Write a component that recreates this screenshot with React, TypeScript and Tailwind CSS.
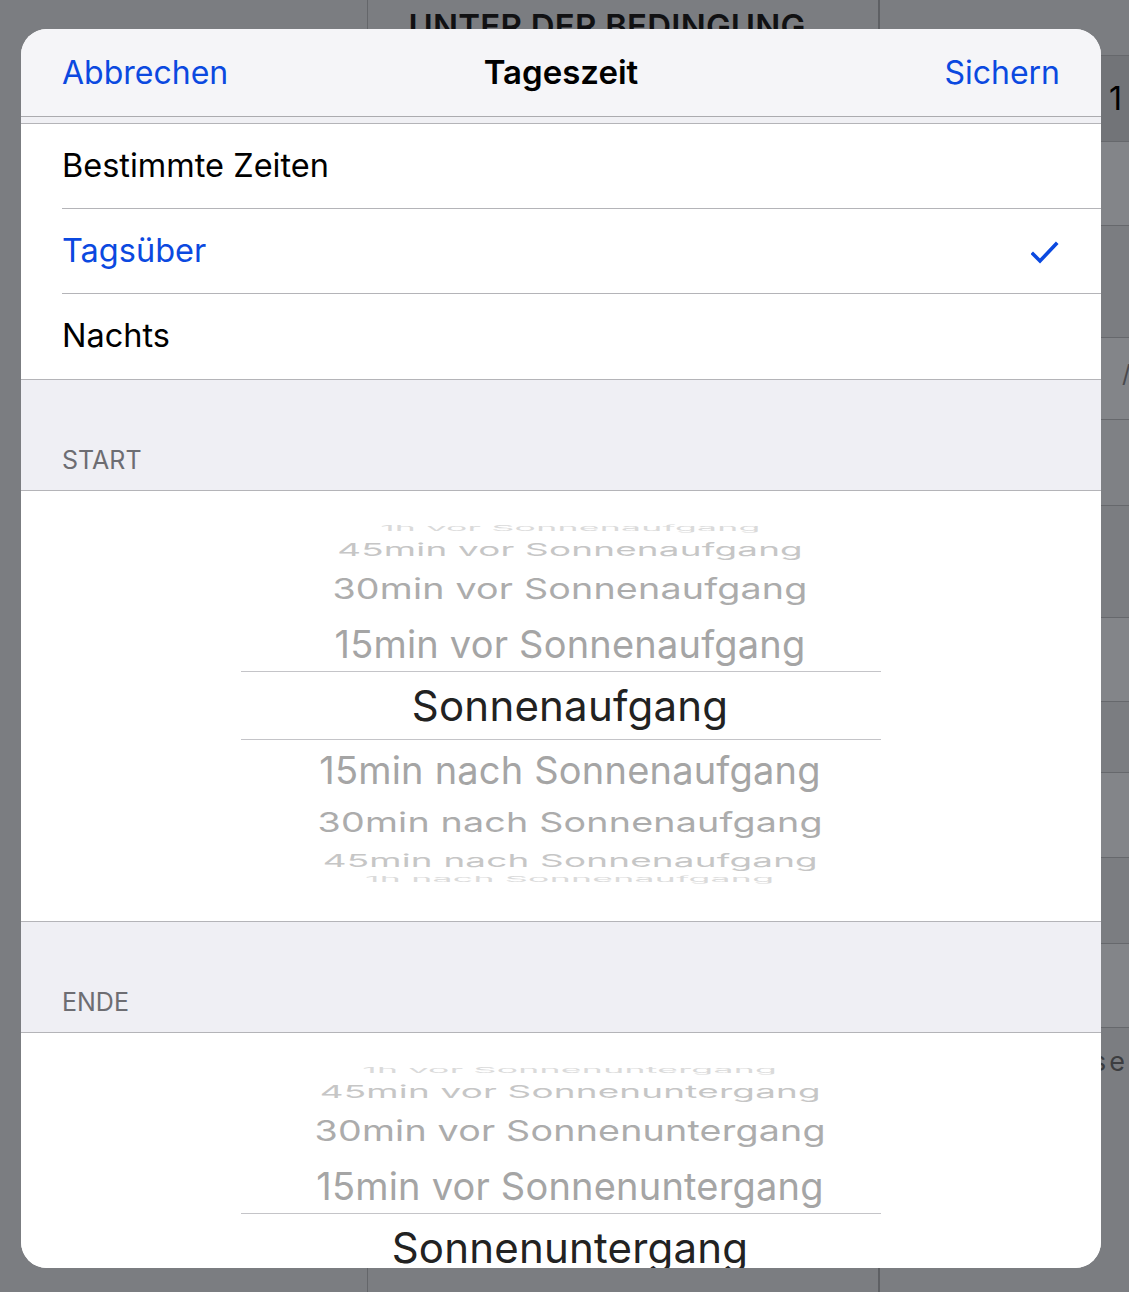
import React from "react";

type WheelItem = {
  label: string;
  h: number;
  size: number;
  sy: number;
  sx: number;
  color: string;
  selected?: boolean;
};

const BLUE = "text-[#0b49e0]";

function wheelItems(base: string): WheelItem[] {
  return [
    { label: `1h vor ${base}`, h: 22, size: 38, sy: 0.2, sx: 0.94, color: "#dadada" },
    { label: `45min vor ${base}`, h: 22, size: 38, sy: 0.46, sx: 0.97, color: "#c6c6c6" },
    { label: `30min vor ${base}`, h: 56, size: 38, sy: 0.74, sx: 0.99, color: "#acacac" },
    { label: `15min vor ${base}`, h: 54, size: 38, sy: 1, sx: 1, color: "#a5a5a5" },
    { label: base, h: 69, size: 42, sy: 1, sx: 1, color: "#222222", selected: true },
    { label: `15min nach ${base}`, h: 60, size: 38, sy: 1, sx: 1, color: "#a5a5a5" },
    { label: `30min nach ${base}`, h: 44, size: 38, sy: 0.72, sx: 0.99, color: "#acacac" },
    { label: `45min nach ${base}`, h: 34, size: 38, sy: 0.46, sx: 0.97, color: "#c6c6c6" },
    { label: `1h nach ${base}`, h: 2, size: 38, sy: 0.2, sx: 0.94, color: "#dadada" },
  ];
}

function Wheel({ base, height }: { base: string; height: number }) {
  return (
    <div className="bg-white overflow-hidden pt-[26px] shrink-0" style={{ height }}>
      {wheelItems(base).map((it) => (
        <div
          key={it.label}
          className={`w-[640px] mx-auto flex items-center justify-center pl-[18px] whitespace-nowrap ${
            it.selected ? "border-y border-[#c4c4c8]" : ""
          }`}
          style={{ height: it.h }}
        >
          <span
            className="leading-none tracking-[0.2px]"
            style={{
              fontSize: it.size,
              color: it.color,
              transform: `scale(${it.sx}, ${it.sy})`,
            }}
          >
            {it.label}
          </span>
        </div>
      ))}
    </div>
  );
}

function SectionHeader({ title }: { title: string }) {
  return (
    <div className="h-[111px] shrink-0 bg-[#efeff4] border-b border-[#b4b4b8] flex items-end px-[41px] pb-[15px]">
      <span className="text-[25px] leading-[30px] text-[#6d6d72]">{title}</span>
    </div>
  );
}

function Row({ label, active, last }: { label: string; active?: boolean; last?: boolean }) {
  return (
    <div className={`pl-[41px] ${last ? "border-b border-[#b4b4b8]" : ""}`}>
      <div
        className={`h-[85px] flex items-center justify-between pr-[42px] ${
          last ? "" : "border-b border-[#b4b4b8]"
        }`}
      >
        <span className={`text-[32.5px] ${active ? BLUE : "text-black"}`}>{label}</span>
        {active && (
          <svg width="28" height="24" viewBox="0 0 28 24" className="mt-[2px]">
            <polyline
              points="2,14 9,21 25,4"
              fill="none"
              stroke="#0b49e0"
              strokeWidth="3.6"
              strokeLinecap="square"
            />
          </svg>
        )}
      </div>
    </div>
  );
}

export default function App() {
  const rightRows = [
    { h: 56, bg: "bg-[#7b7d81]" },
    { h: 86, bg: "bg-[#727478]", text: "1" },
    { h: 84, bg: "bg-[#838589]" },
    { h: 112, bg: "bg-[#7b7d81]" },
    { h: 82, bg: "bg-[#838589]", mark: true },
    { h: 86, bg: "bg-[#7f8185]" },
    { h: 112, bg: "bg-[#7b7d81]" },
    { h: 84, bg: "bg-[#838589]" },
    { h: 71, bg: "bg-[#7b7d81]" },
    { h: 85, bg: "bg-[#838589]" },
    { h: 86, bg: "bg-[#7b7d81]" },
    { h: 84, bg: "bg-[#838589]" },
  ];

  return (
    <div
      className="relative w-[1129px] h-[1292px] overflow-hidden bg-[#7b7d81]"
      style={{ fontFamily: "Inter, 'Noto Sans', sans-serif" }}
    >
      {/* page behind the sheet */}
      <div className="flex h-full">
        <div className="w-[368px] shrink-0 border-r border-[#64666a]" />
        <div className="w-[512px] shrink-0 border-r-2 border-[#5e6064] flex justify-center pr-[32px]">
          <span className="mt-[2px] text-[33px] font-semibold text-[#111113] tracking-[0.2px] whitespace-nowrap">
            UNTER DER BEDINGUNG
          </span>
        </div>
        <div className="flex-1 min-w-0 overflow-hidden flex flex-col">
          {rightRows.map((r, i) => (
            <div
              key={i}
              className={`${r.bg} border-b border-[#66686c] shrink-0 flex items-center pl-[232px]`}
              style={{ height: r.h }}
            >
              {r.text && <span className="text-[32px] text-black -ml-[3px]">{r.text}</span>}
              {r.mark && <span className="text-[24px] text-[#4a4a4e] -mt-[10px] ml-[10px]">/</span>}
            </div>
          ))}
          <div className="pl-[212px] pt-[14px] text-[27px] tracking-[3px] text-[#3c3d40] whitespace-nowrap">
            se a
          </div>
        </div>
      </div>

      {/* sheet */}
      <div className="absolute left-[21px] top-[29px] w-[1080px] h-[1239px] rounded-[26px] overflow-hidden bg-white flex flex-col">
        <div className="h-[88px] shrink-0 bg-[#f5f5f8] border-b border-[#ababaf] flex items-center justify-between px-[41px] relative">
          <span className={`text-[32px] ${BLUE}`}>Abbrechen</span>
          <span className="absolute left-0 right-0 text-center text-[33px] font-semibold text-black pointer-events-none">
            Tageszeit
          </span>
          <span className={`text-[32px] ${BLUE}`}>Sichern</span>
        </div>
        <div className="h-[7px] shrink-0 bg-[#f0f0f4] border-b border-[#b4b4b8]" />
        <Row label="Bestimmte Zeiten" />
        <Row label="Tagsüber" active />
        <Row label="Nachts" last />
        <SectionHeader title="START" />
        <div className="border-b border-[#b4b4b8] shrink-0">
          <Wheel base="Sonnenaufgang" height={430} />
        </div>
        <SectionHeader title="ENDE" />
        <Wheel base="Sonnenuntergang" height={300} />
      </div>
    </div>
  );
}
